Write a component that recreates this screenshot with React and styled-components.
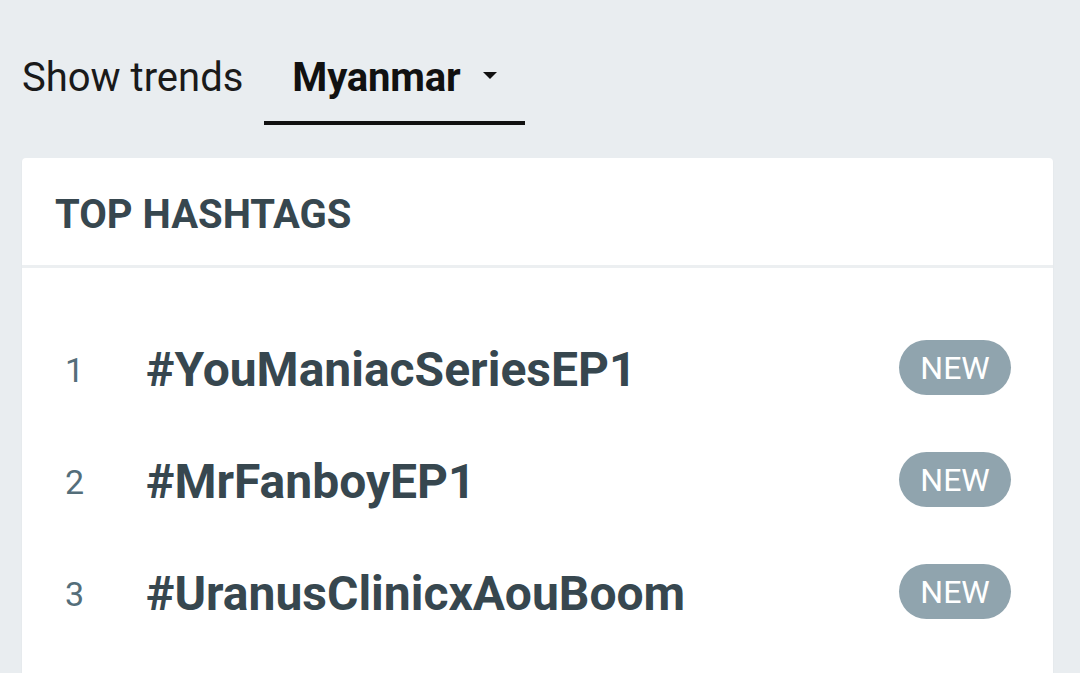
import styled, { createGlobalStyle } from 'styled-components';

const GlobalStyle = createGlobalStyle`
  html, body {
    margin: 0;
    padding: 0;
    background: #e9edf0;
    font-family: Roboto, "Noto Sans", "Liberation Sans", sans-serif;
  }
`;

const Page = styled.div`
  width: 1080px;
  height: 673px;
  overflow: hidden;
  background: #e9edf0;
`;

const TopBar = styled.div`
  display: flex;
  align-items: stretch;
  height: 125px;
  padding-left: 22px;
  gap: 21px;
`;

const Label = styled.div`
  display: flex;
  align-items: center;
  padding-top: 29px;
  font-size: 40px;
  color: #1a1a1a;
`;

const Tab = styled.div`
  display: flex;
  align-items: center;
  gap: 23px;
  padding: 33px 28px 0 28px;
  border-bottom: 4px solid #111;
  font-size: 40px;
  font-weight: 700;
  letter-spacing: -0.2px;
  color: #111;
`;

const Caret = styled.span`
  width: 0;
  height: 0;
  border-left: 7px solid transparent;
  border-right: 7px solid transparent;
  border-top: 7px solid #111;
  margin-top: -4px;
`;

const Card = styled.div`
  margin: 33px 27px 0 22px;
  background: #fff;
  border-radius: 4px 4px 0 0;
  box-shadow: 0 1px 2px rgba(0, 0, 0, 0.05);
  height: 600px;
`;

const CardHeader = styled.div`
  height: 110px;
  padding: 5px 33px 0;
  box-sizing: border-box;
  display: flex;
  align-items: center;
  border-bottom: 3px solid #eceff1;
  font-size: 40px;
  font-weight: 700;
  color: #37474f;
`;

const List = styled.div`
  padding: 72px 42px 0 43px;
  display: flex;
  flex-direction: column;
  gap: 57px;
`;

const Row = styled.div`
  display: flex;
  align-items: center;
  height: 55px;
`;

const Rank = styled.div`
  width: 81px;
  padding-top: 4px;
  font-size: 34px;
  color: #546e7a;
`;

const Tag = styled.div`
  flex: 1;
  padding-top: 4px;
  font-size: 48px;
  font-weight: 700;
  color: #37474f;
`;

const Badge = styled.div`
  width: 112px;
  height: 55px;
  border-radius: 28px;
  background: #90a4ae;
  color: #fff;
  font-size: 32px;
  display: flex;
  align-items: center;
  justify-content: center;
`;

const trends = ['#YouManiacSeriesEP1', '#MrFanboyEP1', '#UranusClinicxAouBoom'];

export default function App() {
  return (
    <Page>
      <GlobalStyle />
      <TopBar>
        <Label>Show trends</Label>
        <Tab>
          Myanmar
          <Caret />
        </Tab>
      </TopBar>
      <Card>
        <CardHeader>TOP HASHTAGS</CardHeader>
        <List>
          {trends.map((t, i) => (
            <Row key={t}>
              <Rank>{i + 1}</Rank>
              <Tag>{t}</Tag>
              <Badge>NEW</Badge>
            </Row>
          ))}
        </List>
      </Card>
    </Page>
  );
}
